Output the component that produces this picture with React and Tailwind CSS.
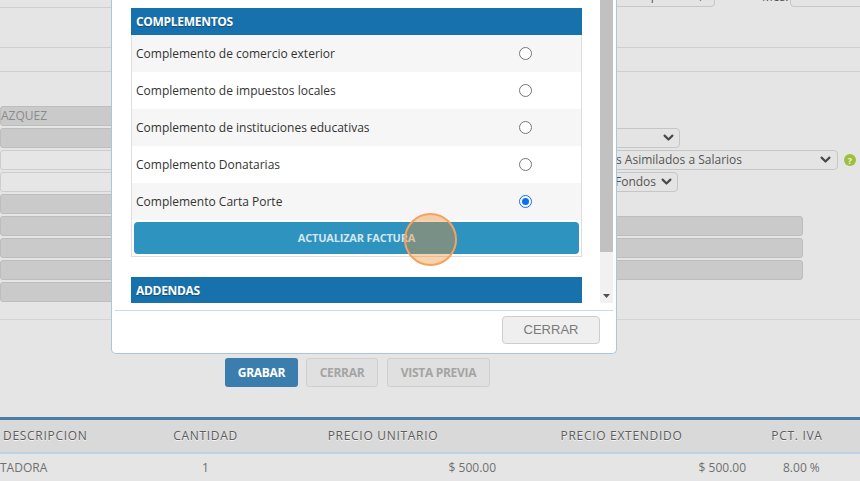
import React from "react";

const font = { fontFamily: '"Open Sans", "Liberation Sans", sans-serif' };

function Chevron({ color = "#4a4a4a" }) {
  return (
    <svg width="11" height="8" viewBox="0 0 11 8" className="shrink-0">
      <path d="M1.6 1.6 L5.5 5.5 L9.4 1.6" stroke={color} strokeWidth="2.2" fill="none" strokeLinecap="round" strokeLinejoin="round" />
    </svg>
  );
}

function Radio({ checked }) {
  if (checked) {
    return (
      <div className="w-[13px] h-[13px] rounded-full border border-[#0b6ff2] bg-white p-[2px]">
        <div className="w-full h-full rounded-full bg-[#0b6ff2]" />
      </div>
    );
  }
  return <div className="w-[13px] h-[13px] rounded-full border border-[#777] bg-white" />;
}

const rows = [
  "Complemento de comercio exterior",
  "Complemento de impuestos locales",
  "Complemento de instituciones educativas",
  "Complemento Donatarias",
  "Complemento Carta Porte",
];

const leftInputs = ["gray", "gray", "light", "light", "gray", "gray", "gray", "gray", "gray"];

export default function App() {
  return (
    <div className="relative w-[860px] h-[481px] overflow-hidden bg-[#e5e5e5]" style={font}>
      {/* Background page */}
      <div className="flex flex-col">
        <div className="h-[320px] border-b border-[#d4d4d4] flex">
          {/* left column */}
          <div className="w-[606px] shrink-0 flex flex-col">
            <div className="h-[8px] border-b border-[#cfcfcf]" />
            <div className="h-[40px] border-b border-[#cfcfcf]" />
            <div className="h-[24px] border-b border-[#cfcfcf]" />
            <div className="mt-[34px] flex flex-col gap-[2px]">
              {leftInputs.map((t, i) => (
                <div
                  key={i}
                  className={
                    "w-[300px] h-[20px] rounded-[3px] border flex items-center text-[12px] text-[#8a8a8a] " +
                    (t === "gray" ? "bg-[#cacaca] border-[#bdbdbd]" : "bg-[#e6e6e6] border-[#cdcdcd]")
                  }
                >
                  {i === 0 ? "AZQUEZ" : ""}
                </div>
              ))}
            </div>
          </div>
          {/* right column */}
          <div className="flex-1 min-w-0 flex flex-col">
            <div className="h-[8px] overflow-hidden flex items-end pb-[1px]">
              <div className="w-[109px] h-[22px] shrink-0 rounded-[4px] border border-[#c6c6c6] bg-[#e4e4e4] flex items-end justify-between pl-[12px] pr-[8px] pb-[4px] text-[12px] text-[#555]">
                <span className="leading-none">una opción...</span>
                <Chevron />
              </div>
              <span className="ml-[47px] text-[12px] text-[#555] leading-none pb-[4px] shrink-0">Mes:</span>
              <div className="ml-[2px] w-[100px] h-[22px] shrink-0 rounded-[4px] border border-[#c6c6c6] bg-[#e4e4e4] flex items-end pl-[10px] pb-[4px] text-[12px] text-[#555]">
                <span className="leading-none">Seleccione...</span>
              </div>
            </div>
            <div className="h-[40px] border-b border-[#cfcfcf]" />
            <div className="h-[24px] border-b border-[#cfcfcf]" />
            <div className="mt-[56px] flex flex-col gap-[2px]">
              <div className="w-[74px] h-[20px] rounded-[4px] border border-[#c6c6c6] bg-[#e4e4e4] flex items-center justify-end pr-[5px]">
                <Chevron />
              </div>
              <div className="flex items-center">
                <div className="w-[232px] h-[20px] rounded-[4px] border border-[#c6c6c6] bg-[#e4e4e4] flex items-center justify-between pl-[9px] pr-[6px] text-[12px] text-[#555]">
                  <span>s Asimilados a Salarios</span>
                  <Chevron />
                </div>
                <div className="ml-[6px] w-[12px] h-[12px] rounded-full bg-[#9dbe3f] flex items-center justify-center text-[9px] font-bold text-[#eef5d8] leading-none">?</div>
              </div>
              <div className="w-[72px] h-[20px] rounded-[4px] border border-[#c6c6c6] bg-[#e4e4e4] flex items-center justify-between pl-[8px] pr-[5px] text-[12px] text-[#555]">
                <span>Fondos</span>
                <Chevron />
              </div>
            </div>
            <div className="mt-[24px] flex flex-col gap-[2px]">
              {[0, 1, 2].map((i) => (
                <div key={i} className="w-[197px] h-[20px] rounded-[3px] border border-[#bdbdbd] bg-[#cacaca]" />
              ))}
            </div>
          </div>
        </div>

        {/* action buttons */}
        <div className="mt-[38px] ml-[225px] flex gap-[8px] h-[29px]">
          <div className="w-[73px] rounded-[3px] bg-[#3b7eae] text-white text-[12px] font-bold tracking-[-0.3px] flex items-center justify-center">GRABAR</div>
          <div className="w-[72px] rounded-[3px] bg-[#e0e0e0] border border-[#cfcfcf] text-[#a4a4a4] text-[12px] font-bold tracking-[-0.3px] flex items-center justify-center">CERRAR</div>
          <div className="ml-[1px] w-[103px] rounded-[3px] bg-[#e0e0e0] border border-[#cfcfcf] text-[#a4a4a4] text-[12px] font-bold tracking-[-0.3px] flex items-center justify-center">VISTA PREVIA</div>
        </div>

        {/* table */}
        <div className="mt-[30px] border-t-[3px] border-[#4b7ea7]">
          <div className="h-[34px] bg-[#d9d9d9] border-b-2 border-[#bdd2e3] flex items-center text-[12px] tracking-[0.7px] text-[#5c5c5c] [text-shadow:0_1px_0_#f4f4f4]">
            <div className="w-[150px] pl-[3px]">DESCRIPCION</div>
            <div className="w-[111px] text-center">CANTIDAD</div>
            <div className="w-[244px] text-center">PRECIO UNITARIO</div>
            <div className="w-[233px] text-center">PRECIO EXTENDIDO</div>
            <div className="w-[118px] text-center">PCT. IVA</div>
          </div>
          <div className="h-[27px] flex items-center text-[12px] text-[#707070]">
            <div className="w-[150px]">TADORA</div>
            <div className="w-[111px] text-center">1</div>
            <div className="w-[235px] text-right">$ 500.00</div>
            <div className="w-[250px] text-right">$ 500.00</div>
            <div className="pl-[37px]">8.00 %</div>
          </div>
        </div>
      </div>

      {/* Modal */}
      <div className="absolute left-[111px] top-0 w-[506px] h-[354px] bg-white border-x border-b border-[#a9c6db] rounded-b-[5px] px-[3px] flex flex-col">
        <div className="h-[303px] flex">
          <div className="flex-1 overflow-hidden pl-[16px] pr-[18px]">
            <div className="mt-[8px] h-[27px] bg-[#1771ad] text-white text-[12px] font-bold tracking-[-0.3px] flex items-center pl-[5px] [text-shadow:0_1px_1px_rgba(0,0,0,0.35)]">COMPLEMENTOS</div>
            <div className="border-x border-b border-[#dedede]">
              {rows.map((r, i) => (
                <div key={r} className={"h-[37px] flex items-center justify-between pl-[4px] pr-[49px] text-[12px] text-[#333] " + (i % 2 === 0 ? "bg-[#f6f6f6]" : "bg-white")}>
                  <span>{r}</span>
                  <Radio checked={i === 4} />
                </div>
              ))}
              <div className="p-[2px]">
                <div className="h-[32px] rounded-[4px] bg-[#2f93c0] text-[#d3e6ef] text-[11px] font-bold tracking-[-0.2px] flex items-center justify-center">ACTUALIZAR FACTURA</div>
              </div>
            </div>
            <div className="mt-[20px] h-[27px] bg-[#1771ad] text-white text-[12px] font-bold tracking-[-0.3px] flex items-center pl-[5px] [text-shadow:0_1px_1px_rgba(0,0,0,0.35)]">ADDENDAS</div>
          </div>
          {/* scrollbar */}
          <div className="w-[13px] bg-[#f1f1f1] flex flex-col">
            <div className="h-[252px] bg-[#c1c1c1]" />
            <div className="flex-1 flex items-end justify-center pb-[5px]">
              <svg width="7" height="4" viewBox="0 0 7 4"><path d="M0 0 L7 0 L3.5 4 Z" fill="#505050" /></svg>
            </div>
          </div>
        </div>
        <div className="mt-[7px] h-px bg-[#c6dae7]" />
        <div className="flex justify-end pr-[13px] pt-[5px]">
          <div className="w-[98px] h-[28px] rounded-[4px] border border-[#cdcdcd] bg-[#efefef] text-[#7a7a7a] text-[13px] flex items-center justify-center" style={{ fontFamily: '"Liberation Sans", Arial, sans-serif' }}>CERRAR</div>
        </div>
      </div>

      {/* click indicator */}
      <div className="absolute left-[404px] top-[213px] w-[53px] h-[53px] rounded-full border-2 border-[#f4a35f] bg-[rgba(240,140,40,0.38)]" />
    </div>
  );
}
